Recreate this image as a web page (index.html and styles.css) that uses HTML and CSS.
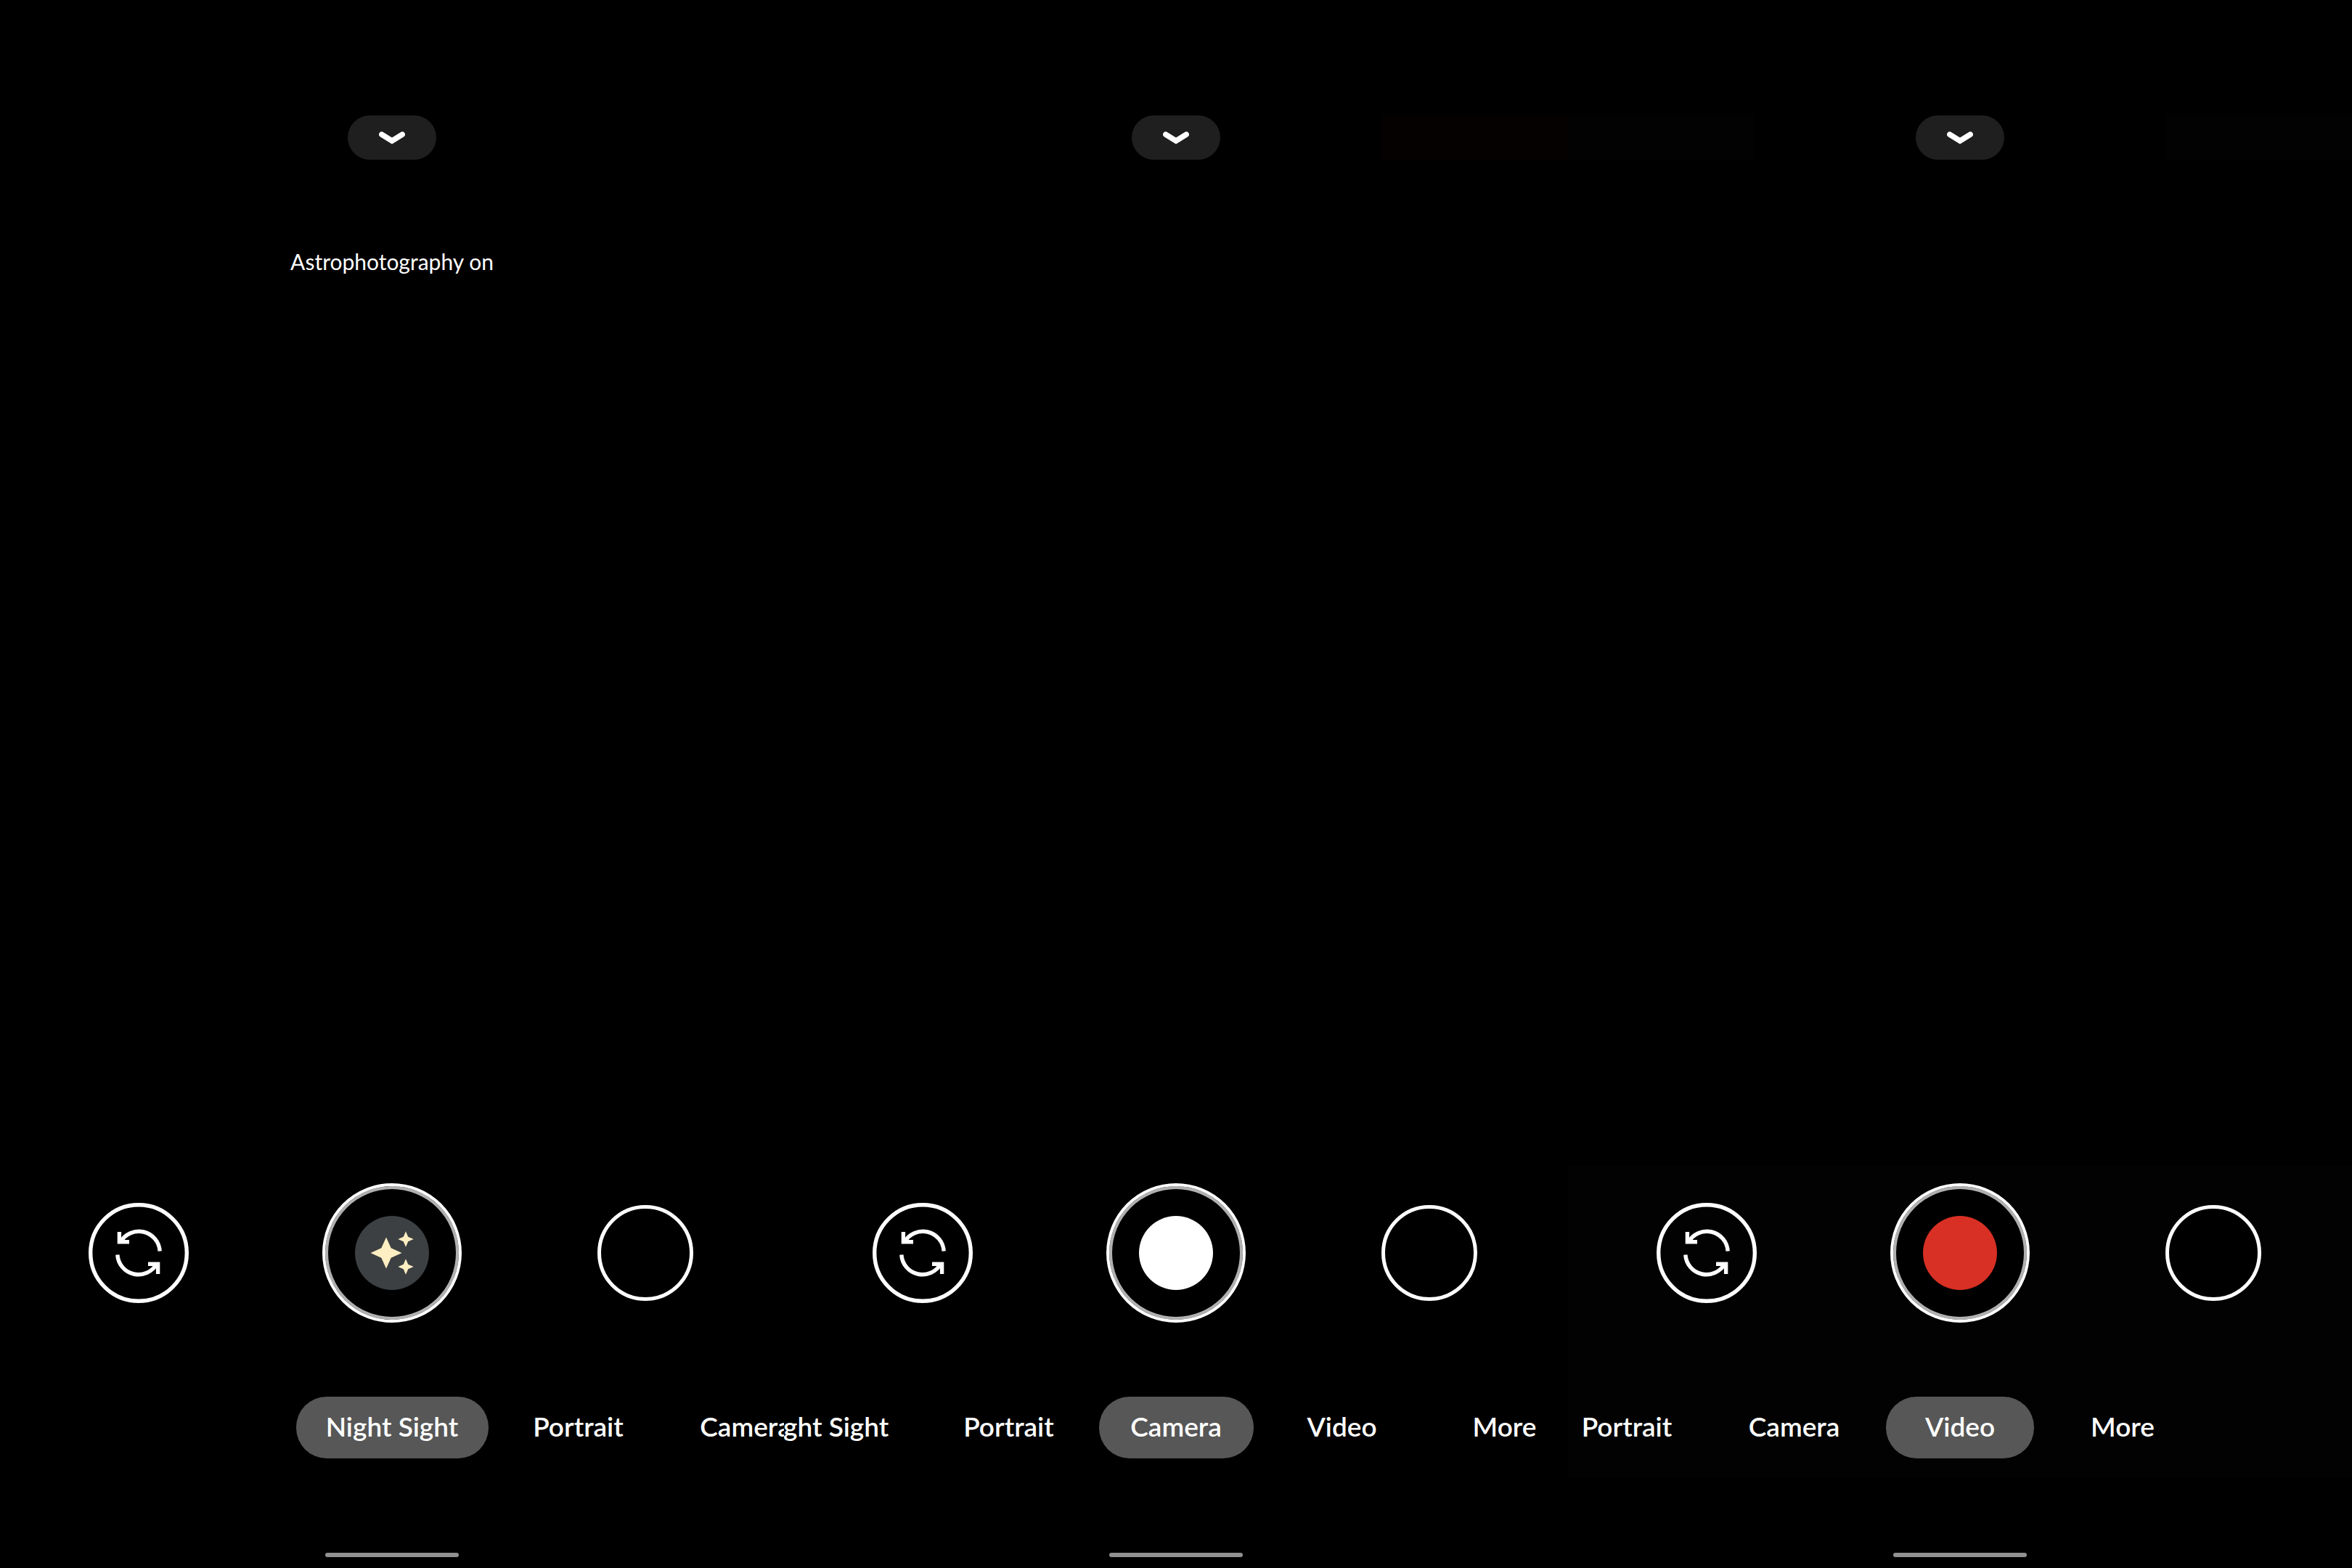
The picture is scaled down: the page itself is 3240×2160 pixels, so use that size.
FILE: index.html
```html
<!DOCTYPE html>
<html lang="en">
<head>
<meta charset="utf-8">
<title>Camera modes</title>
<link rel="stylesheet" href="styles.css">
</head>
<body>
<svg class="sprite" aria-hidden="true">
  <symbol id="chevron" viewBox="0 0 36 18"><path d="M3.800 4.200 18 13l14.200-8.800" fill="none" stroke="#fff" stroke-width="7.500" stroke-linecap="round"/></symbol>
  <symbol id="flip" viewBox="0 0 138 138">
    <g fill="none" stroke="#fff" stroke-width="5.400">
      <circle cx="69" cy="69" r="66.300"/>
      <path d="M98.200 66.500A29 29 0 0 0 44 54"/><path d="M42.400 40V53.700H56"/>
      <path d="M39.800 71.500A29 29 0 0 0 94 84"/><path d="M95.600 98V84.300H82"/>
    </g>
  </symbol>
  <symbol id="stars" viewBox="0 0 102 102">
    <g fill="#feefc3">
      <path d="M43 29.500 49.700 44.300 64.500 51 49.700 57.700 43 72.500 36.300 57.700 21.500 51 36.300 44.300z"/>
      <path d="M70 21.300 73.200 28.800 80.700 32 73.200 35.200 70 42.700 66.800 35.200 59.300 32 66.800 28.800z"/>
      <path d="M70 59.300 73.200 66.800 80.700 70 73.200 73.200 70 80.700 66.800 73.200 59.300 70 66.800 66.800z"/>
    </g>
  </symbol>
</svg>
<main class="screens">
  <section class="screen">
    <header class="top">
      <span class="glow"></span>
      <button class="expand" aria-label="Show settings"><svg class="chevron"><use href="#chevron"/></svg></button>
      <span class="glow"></span>
    </header>
    <p class="status">Astrophotography on</p>
    <div class="controls">
      <div class="actions">
        <button class="flip" aria-label="Switch camera"><svg><use href="#flip"/></svg></button>
        <button class="shutter" aria-label="Take night photo"><span class="core night-core"><svg><use href="#stars"/></svg></span></button>
        <span class="gallery-slot"><button class="gallery" aria-label="Open gallery"></button></span>
      </div>
      <nav class="modes">
        <div class="before"></div>
        <button class="mode night active">Night Sight</button>
        <div class="after"><button class="mode portrait">Portrait</button><button class="mode camera">Camera</button></div>
      </nav>
    </div>
    <div class="home"></div>
  </section>

  <section class="screen">
    <header class="top">
      <span class="glow"></span>
      <button class="expand" aria-label="Show settings"><svg class="chevron"><use href="#chevron"/></svg></button>
      <span class="glow warm"></span>
    </header>
    <div class="controls">
      <div class="actions">
        <button class="flip" aria-label="Switch camera"><svg><use href="#flip"/></svg></button>
        <button class="shutter" aria-label="Take photo"><span class="core photo-core"></span></button>
        <span class="gallery-slot"><button class="gallery" aria-label="Open gallery"></button></span>
      </div>
      <nav class="modes">
        <div class="before"><button class="mode night">Night Sight</button><button class="mode portrait">Portrait</button></div>
        <button class="mode camera active">Camera</button>
        <div class="after"><button class="mode">Video</button><button class="mode">More</button></div>
      </nav>
    </div>
    <div class="home"></div>
  </section>

  <section class="screen">
    <header class="top">
      <span class="glow dim"></span>
      <button class="expand" aria-label="Show settings"><svg class="chevron"><use href="#chevron"/></svg></button>
      <span class="glow dim"></span>
    </header>
    <div class="controls dim">
      <div class="actions">
        <button class="flip" aria-label="Switch camera"><svg><use href="#flip"/></svg></button>
        <button class="shutter" aria-label="Record video"><span class="core video-core"></span></button>
        <span class="gallery-slot"><button class="gallery" aria-label="Open gallery"></button></span>
      </div>
      <nav class="modes">
        <div class="before"><button class="mode portrait">Portrait</button><button class="mode camera">Camera</button></div>
        <button class="mode active">Video</button>
        <div class="after"><button class="mode">More</button></div>
      </nav>
    </div>
    <div class="home"></div>
  </section>
</main>
</body>
</html>
```
FILE: styles.css
```css
* {
  box-sizing: border-box;
}

body {
  margin: 0;
  background: #000;
  color: #fff;
  font-family: Lato, "Open Sans", sans-serif;
}

button {
  margin: 0;
  padding: 0;
  border: 0;
  background: none;
  color: inherit;
  font: inherit;
}

svg {
  display: block;
  width: 100%;
  height: 100%;
}

.sprite {
  position: absolute;
  width: 0;
  height: 0;
}

.screens {
  display: grid;
  grid-template-columns: repeat(3, minmax(0, 1fr));
  min-height: 100vh;
}

.screen {
  display: flex;
  flex-direction: column;
  overflow: hidden;
  padding: 159px 0 15px;
}

.top {
  display: flex;
  justify-content: space-between;
  height: 61px;
}

.glow {
  width: 256px;
}

.glow.warm {
  background: #060101;
}

.dim {
  background: #020202;
}

.expand {
  display: flex;
  align-items: center;
  justify-content: center;
  width: 122px;
  border-radius: 31px;
  background: #1f1f1f;
}

.chevron {
  width: 36px;
  height: 18px;
}

.status {
  margin: 122px 0 0;
  font-size: 30px;
  line-height: 36px;
  text-align: center;
}

.controls {
  margin-top: auto;
  padding: 23px 0 26px;
}

.actions {
  display: flex;
  align-items: center;
  justify-content: space-between;
  padding: 0 122px;
}

.flip,
.gallery-slot {
  width: 138px;
  height: 138px;
}

.gallery-slot {
  display: flex;
  align-items: center;
  justify-content: center;
}

.gallery {
  width: 132px;
  height: 132px;
  border: 5px solid #fff;
  border-radius: 50%;
  background: #000;
}

.shutter {
  display: flex;
  align-items: center;
  justify-content: center;
  width: 192px;
  height: 192px;
  border: 4px solid #fff;
  border-radius: 50%;
  background: #000;
  box-shadow: inset 0 0 0 4px #b0b0b0;
}

.core {
  width: 102px;
  height: 102px;
  border-radius: 50%;
}

.night-core {
  background: #3c4043;
}

.photo-core {
  background: #fff;
}

.video-core {
  background: #d93025;
}

.modes {
  display: grid;
  grid-template-columns: minmax(0, 1fr) auto minmax(0, 1fr);
  gap: 20px;
  margin-top: 102px;
}

.before,
.after {
  display: flex;
  gap: 20px;
}

.before {
  justify-content: flex-end;
}

.mode {
  flex: none;
  width: 204px;
  height: 85px;
  padding-bottom: 3px;
  border-radius: 42px;
  font-size: 37px;
  font-weight: 600;
  line-height: 44px;
  white-space: nowrap;
}

.mode.night {
  width: 265px;
}

.mode.portrait {
  width: 208px;
}

.mode.camera {
  width: 213px;
}

.mode.active {
  background: #575757;
}

.home {
  align-self: center;
  width: 184px;
  height: 6px;
  margin-top: 104px;
  border-radius: 3px;
  background: #919191;
}
```
